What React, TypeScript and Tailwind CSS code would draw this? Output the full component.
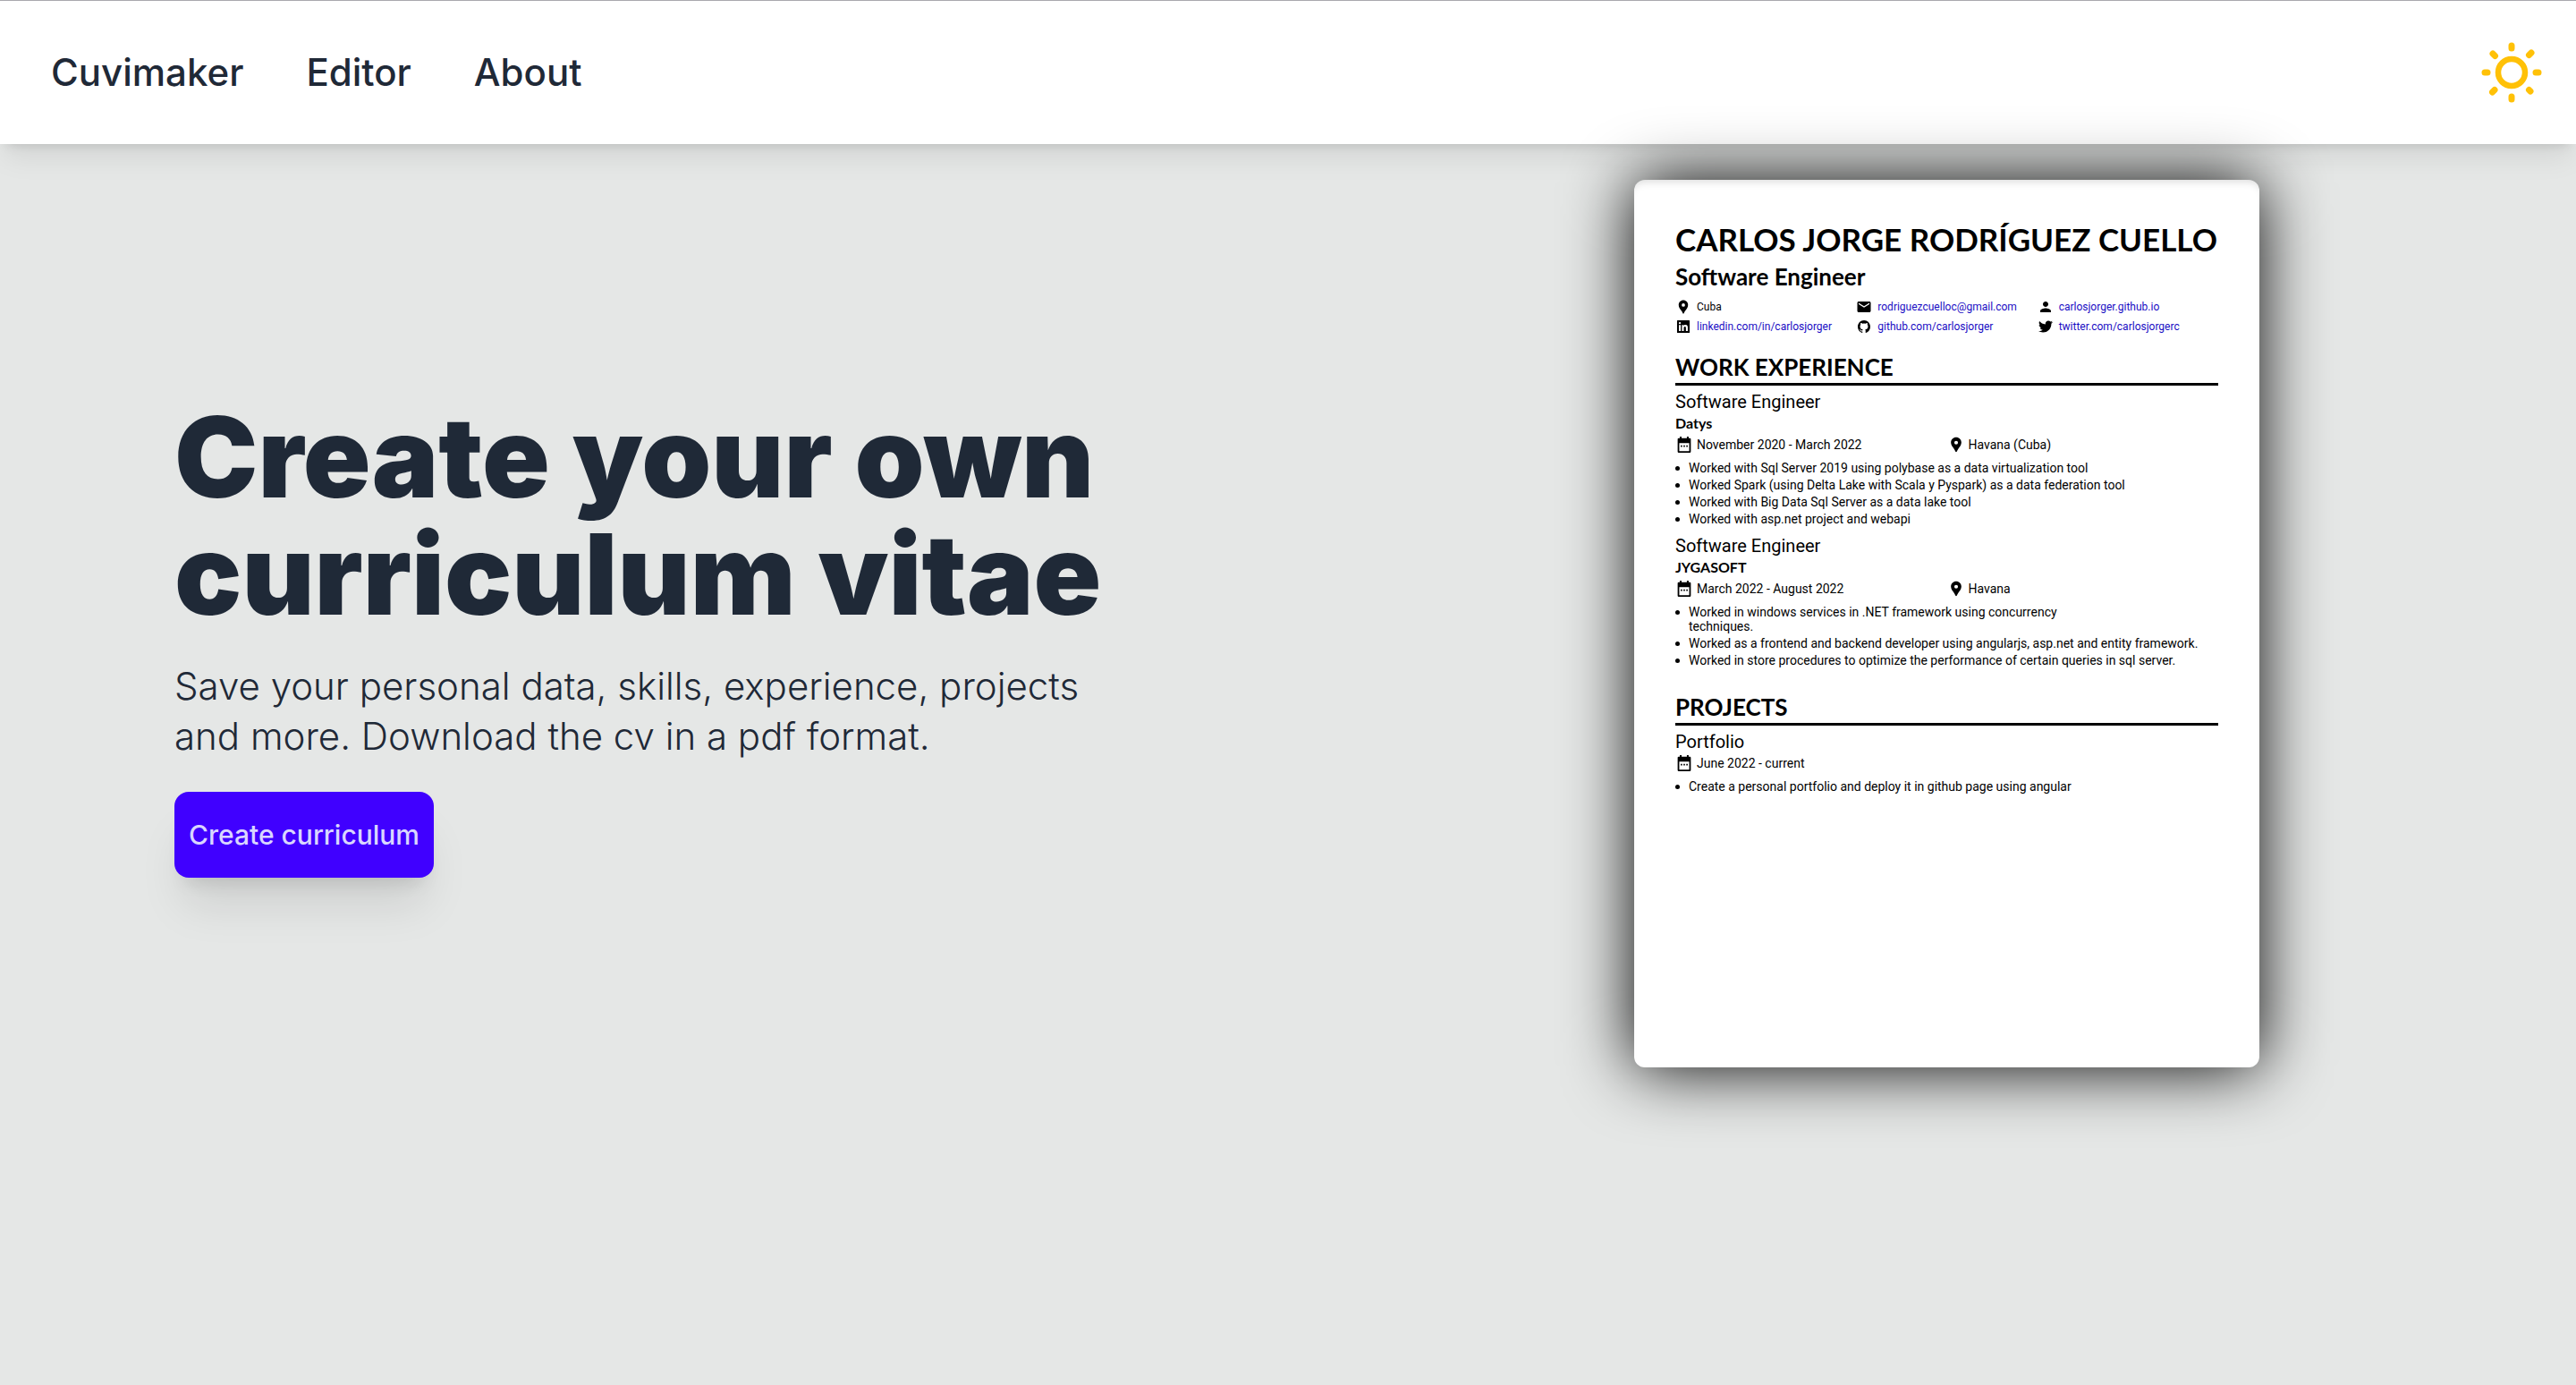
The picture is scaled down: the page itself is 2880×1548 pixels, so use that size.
import React from "react";
import { MdEmail, MdPerson, MdLocationPin } from "react-icons/md";
import { FaTwitter } from "react-icons/fa";
import { AiFillLinkedin } from "react-icons/ai";
import { IoLogoGithub } from "react-icons/io5";

type IconProps = { className?: string };

function SunIcon({ className }: IconProps) {
  return (
    <svg viewBox="0 0 68 68" className={className} fill="none" stroke="currentColor" strokeLinecap="round" aria-hidden="true">
      <circle cx="34" cy="34" r="15" strokeWidth="6.500" />
      <path
        strokeWidth="7"
        d="M34 4v3M34 61v3M4 34h3M61 34h3M13 13l2.500 2.500M53.500 53.500l1.500 1.500M56 12l-2.500 2.500M15 53.500l-2.500 2.500"
      />
    </svg>
  );
}

function CalendarIcon({ className }: IconProps) {
  return (
    <svg viewBox="0 0 18 22" className={className} aria-hidden="true">
      <path
        fill="currentColor"
        fillRule="evenodd"
        d="M3 0h2.400v2h7.200V0H15v2h1.500A1.500 1.500 0 0 1 18 3.500v17a1.500 1.500 0 0 1-1.500 1.500h-15A1.500 1.500 0 0 1 0 20.500v-17A1.500 1.500 0 0 1 1.500 2H3zM2.200 9v10.800h13.600V9zM4.200 12h2v2h-2zm3.800 0h2v2H8zm3.800 0h2v2h-2z"
      />
    </svg>
  );
}

type Contact = { icon: React.ReactNode; text: string; href?: string };

const contacts: Contact[] = [
  { icon: <MdLocationPin className="size-[18px]" />, text: "Cuba" },
  { icon: <MdEmail className="size-[18px]" />, text: "rodriguezcuelloc@gmail.com", href: "mailto:rodriguezcuelloc@gmail.com" },
  { icon: <MdPerson className="size-5" />, text: "carlosjorger.github.io", href: "https://carlosjorger.github.io" },
  { icon: <AiFillLinkedin className="size-[18px]" />, text: "linkedin.com/in/carlosjorger", href: "https://linkedin.com/in/carlosjorger" },
  { icon: <IoLogoGithub className="size-4" />, text: "github.com/carlosjorger", href: "https://github.com/carlosjorger" },
  { icon: <FaTwitter className="size-4" />, text: "twitter.com/carlosjorgerc", href: "https://twitter.com/carlosjorgerc" },
];

type Entry = { title: string; company?: string; date: string; place?: string; items: string[] };

const jobs: Entry[] = [
  {
    title: "Software Engineer",
    company: "Datys",
    date: "November 2020 - March 2022",
    place: "Havana (Cuba)",
    items: [
      "Worked with Sql Server 2019 using polybase as a data virtualization tool",
      "Worked Spark (using Delta Lake with Scala y Pyspark) as a data federation tool",
      "Worked with Big Data Sql Server as a data lake tool",
      "Worked with asp.net project and webapi",
    ],
  },
  {
    title: "Software Engineer",
    company: "JYGASOFT",
    date: "March 2022 - August 2022",
    place: "Havana",
    items: [
      "Worked in windows services in .NET framework using concurrency\ntechniques.",
      "Worked as a frontend and backend developer using angularjs, asp.net and entity framework.",
      "Worked in store procedures to optimize the performance of certain queries in sql server.",
    ],
  },
];

const projects: Entry[] = [
  {
    title: "Portfolio",
    date: "June 2022 - current",
    items: ["Create a personal portfolio and deploy it in github page using angular"],
  },
];

function EntryBlock({ entry }: { entry: Entry }) {
  return (
    <article>
      <h4 className="text-[20px] leading-6">{entry.title}</h4>
      {entry.company && (
        <h5 className="font-['Lato',sans-serif] text-[16px] leading-6 font-bold">{entry.company}</h5>
      )}
      <div className="grid grid-cols-2 text-[14px] leading-6">
        <p className="flex items-center">
          <span className="flex w-6 pl-0.5">
            <CalendarIcon className="h-[18px] w-4" />
          </span>
          {entry.date}
        </p>
        {entry.place && (
          <p className="flex items-center">
            <span className="flex w-6">
              <MdLocationPin className="size-5" />
            </span>
            {entry.place}
          </p>
        )}
      </div>
      <ul className="mt-1.5 flex flex-col gap-[3px] text-[14px] leading-4">
        {entry.items.map((item) => (
          <li key={item} className="flex whitespace-pre-line">
            <span className="mt-[6px] mr-2.5 size-[5px] shrink-0 rounded-full bg-black" />
            <span>{item}</span>
          </li>
        ))}
      </ul>
    </article>
  );
}

function Section({ title, entries }: { title: string; entries: Entry[] }) {
  return (
    <section>
      <h3 className="mb-1.5 border-b-[3px] border-black pb-0.5 font-['Lato',sans-serif] text-[26px] leading-8 font-bold">
        {title}
      </h3>
      <div className="flex flex-col gap-2.5">
        {entries.map((entry) => (
          <EntryBlock key={entry.date} entry={entry} />
        ))}
      </div>
    </section>
  );
}

function Resume() {
  return (
    <div className="min-h-[992px] w-[699px] shrink-0 rounded-xl bg-white px-[46px] pt-11 pb-8 font-['Roboto',sans-serif] text-black shadow-[0_0_76px_#000,inset_0_8px_10px_-6px_rgba(0,0,0,0.15)]">
      <h2 className="font-['Lato',sans-serif] text-[35px] leading-[44px] font-bold whitespace-nowrap">
        CARLOS JORGE RODRÍGUEZ CUELLO
      </h2>
      <p className="mt-1 font-['Lato',sans-serif] text-[26px] leading-8 font-bold">Software Engineer</p>
      <ul className="mt-[7px] grid grid-cols-3 text-[12px] leading-[22px]">
        {contacts.map((c) => (
          <li key={c.text} className="flex items-center whitespace-nowrap">
            <span className="mr-1.5 flex w-[18px] justify-center">{c.icon}</span>
            {c.href ? (
              <a href={c.href} className="text-[#1a0dc4]">
                {c.text}
              </a>
            ) : (
              c.text
            )}
          </li>
        ))}
      </ul>
      <div className="mt-[18px] flex flex-col gap-7">
        <Section title="WORK EXPERIENCE" entries={jobs} />
        <Section title="PROJECTS" entries={projects} />
      </div>
    </div>
  );
}

export default function App() {
  return (
    <div className="flex min-h-screen flex-col bg-white font-['Inter',sans-serif] text-[#1f2937]">
      <header className="relative z-10 flex h-[161px] items-center justify-between border-t border-[#a9a8ae] bg-white/50 pr-[38px] pl-[57px] shadow-[0_20px_30px_-6px_rgba(0,0,0,0.08),0_8px_12px_-8px_rgba(0,0,0,0.15)]">
        <nav className="flex gap-[70px] text-[42px] leading-[56px] font-medium">
          <a href="#home">Cuvimaker</a>
          <a href="#editor">Editor</a>
          <a href="#about">About</a>
        </nav>
        <button type="button" aria-label="Toggle theme" className="text-[#ffc107]">
          <SunIcon className="size-[68px]" />
        </button>
      </header>
      <main className="flex flex-1 items-start justify-between gap-16 bg-[#e5e7e6] pt-10 pr-[354px] pl-[195px]">
        <div className="pt-[244px]">
          <h1 className="text-[125px] leading-[131px] font-black">
            Create your own
            <br />
            curriculum vitae
          </h1>
          <p className="mt-8 text-[42px] leading-[56px] font-light">
            Save your personal data, skills, experience, projects
            <br />
            and more. Download the cv in a pdf format.
          </p>
          <button
            type="button"
            className="mt-[34px] h-24 rounded-2xl bg-[#4000ff] px-4 text-[30px] font-medium text-[#d9d6ff] shadow-[0_40px_50px_-10px_rgba(0,0,0,0.1),0_16px_20px_-12px_rgba(0,0,0,0.12)]"
          >
            Create curriculum
          </button>
        </div>
        <Resume />
      </main>
    </div>
  );
}
